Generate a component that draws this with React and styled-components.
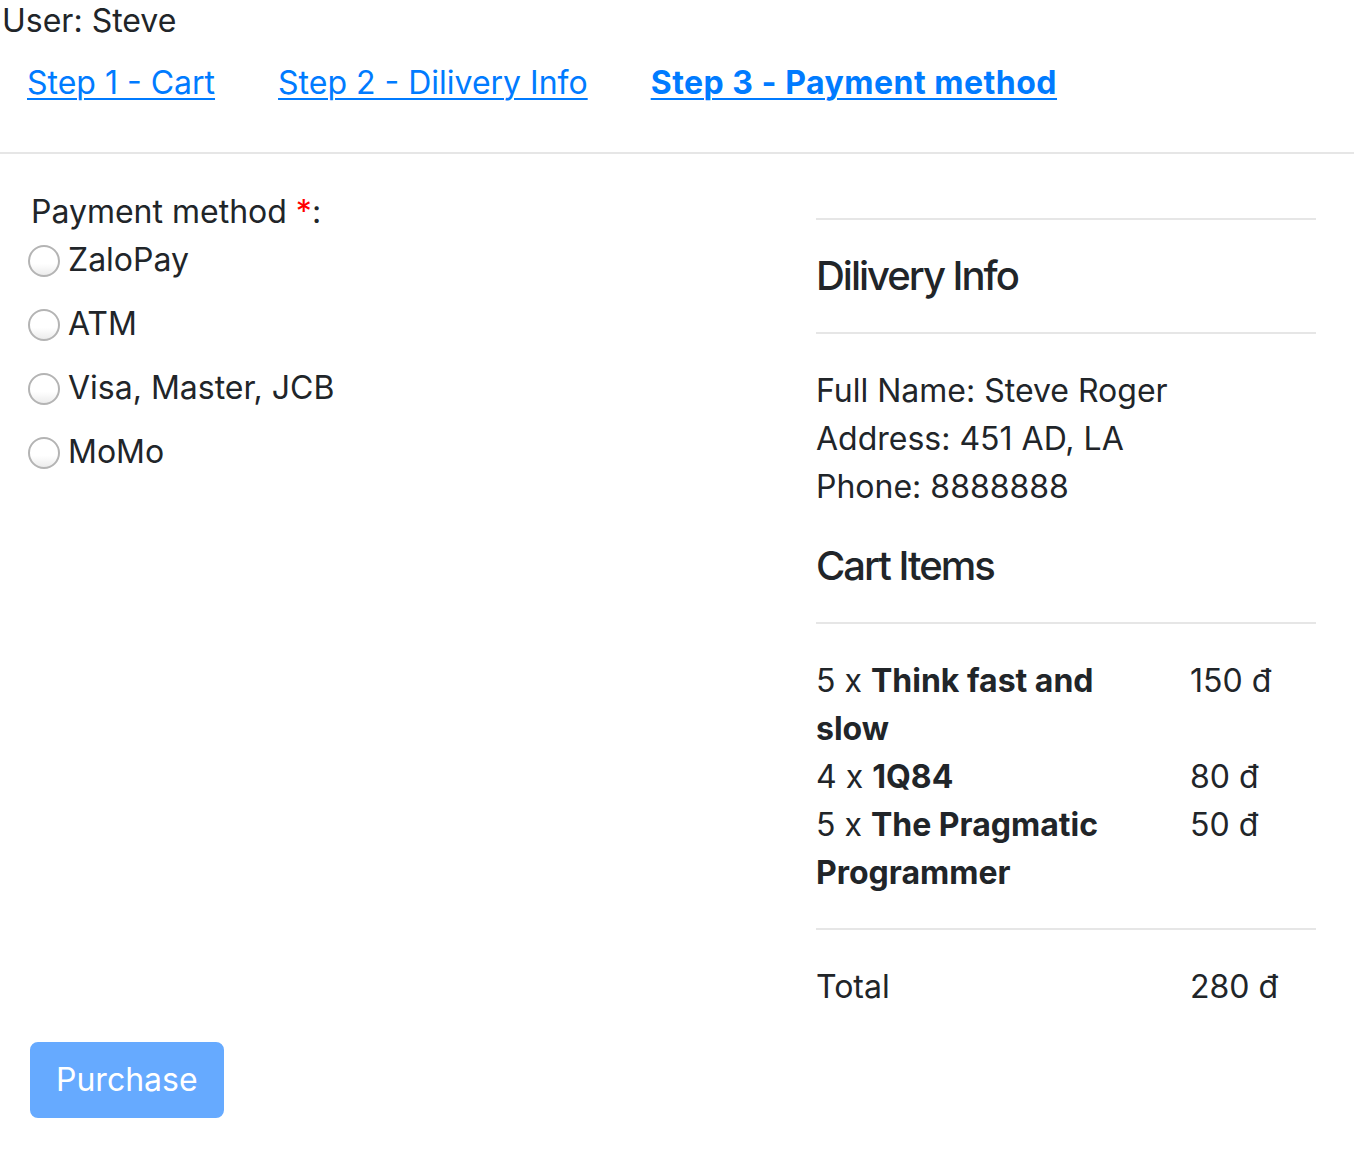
import React from 'react';
import styled, { createGlobalStyle } from 'styled-components';

const Global = createGlobalStyle`
  html, body { margin: 0; padding: 0; background: #fff; }
  body {
    font-family: Inter, "Noto Sans", "Liberation Sans", sans-serif;
    font-size: 32px;
    line-height: 48px;
    color: #212529;
  }
`;

const UserBar = styled.div`
  padding: 1px 0 0 2px;
  line-height: 40px;
  height: 40px;
  box-sizing: border-box;
`;

const Nav = styled.nav`
  display: flex;
  gap: 63px;
  padding: 19px 0 13px 27px;
  margin-bottom: 32px;
`;

const StepLink = styled.a`
  color: #007bff;
  text-decoration: underline;
  text-underline-offset: 4px;
  text-decoration-thickness: 2px;
  font-weight: ${(p) => (p.$active ? 700 : 400)};
  letter-spacing: ${(p) => (p.$active ? '0.5px' : '0')};
  cursor: pointer;
`;

const Divider = styled.div`
  height: 2px;
  background: #e6e6e6;
`;

const Main = styled.div`
  display: grid;
  grid-template-columns: 786px 500px;
  padding: 32px 0 0 30px;
`;

const Column = styled.div`
  display: flex;
  flex-direction: column;
  padding-top: ${(p) => p.$offset || 0}px;
`;

const FieldLabel = styled.div`
  padding-left: 1px;
`;

const Required = styled.span`
  color: #ff0000;
`;

const RadioRow = styled.label`
  display: flex;
  align-items: flex-start;
  margin-bottom: 16px;
  cursor: pointer;
`;

const RadioCircle = styled.span`
  box-sizing: border-box;
  width: 32px;
  height: 32px;
  margin: 9px 8px 0 -2px;
  border-radius: 50%;
  border: 2px solid #b4b4b4;
  background: linear-gradient(#ffffff 0%, #ffffff 60%, #ececec 100%);
  flex: none;
`;

const Rule = styled.div`
  height: 2px;
  background: #e6e6e6;
  margin: 32px 0;
`;

const Heading = styled.h5`
  margin: 0;
  font-size: 40px;
  line-height: 48px;
  font-weight: 500;
  letter-spacing: -2px;
`;

const InfoBlock = styled.div`
  padding-top: 1px;
  margin-bottom: 31px;
`;

const ItemsGrid = styled.div`
  display: grid;
  grid-template-columns: 374px 1fr;
  padding-top: 1px;
  margin-bottom: -1px;
`;

const ItemName = styled.div`
  padding-right: 30px;
`;

const Footer = styled.div`
  padding: 32px 0 0 30px;
`;

const PurchaseButton = styled.button`
  font-family: inherit;
  font-size: 32px;
  line-height: 48px;
  padding: 12px 24px;
  border: 2px solid #66aaff;
  background: #66aaff;
  color: #fff;
  border-radius: 8px;
  cursor: default;
`;

const methods = ['ZaloPay', 'ATM', 'Visa, Master, JCB', 'MoMo'];

const items = [
  { qty: 5, name: 'Think fast and slow', price: '150 đ' },
  { qty: 4, name: '1Q84', price: '80 đ' },
  { qty: 5, name: 'The Pragmatic Programmer', price: '50 đ' },
];

export default function App() {
  return (
    <>
      <Global />
      <UserBar>User: Steve</UserBar>
      <Nav>
        <StepLink>Step 1 - Cart</StepLink>
        <StepLink>Step 2 - Dilivery Info</StepLink>
        <StepLink $active>Step 3 - Payment method</StepLink>
      </Nav>
      <Divider />
      <Main>
        <Column $offset={2}>
          <FieldLabel>
            Payment method <Required>*</Required>:
          </FieldLabel>
          {methods.map((m) => (
            <RadioRow key={m}>
              <RadioCircle />
              {m}
            </RadioRow>
          ))}
        </Column>
        <Column>
          <Rule />
          <Heading>Dilivery Info</Heading>
          <Rule />
          <InfoBlock>
            <div>Full Name: Steve Roger</div>
            <div>Address: 451 AD, LA</div>
            <div>Phone: 8888888</div>
          </InfoBlock>
          <Heading>Cart Items</Heading>
          <Rule />
          <ItemsGrid>
            {items.map((it) => (
              <React.Fragment key={it.name}>
                <ItemName>
                  {it.qty} x <b>{it.name}</b>
                </ItemName>
                <div>{it.price}</div>
              </React.Fragment>
            ))}
          </ItemsGrid>
          <Rule />
          <ItemsGrid>
            <div>Total</div>
            <div>280 đ</div>
          </ItemsGrid>
        </Column>
      </Main>
      <Footer>
        <PurchaseButton disabled>Purchase</PurchaseButton>
      </Footer>
    </>
  );
}
